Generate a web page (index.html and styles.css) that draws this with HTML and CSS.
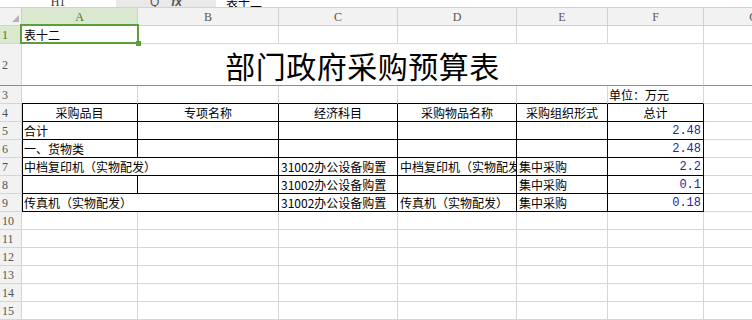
FILE: index.html
```html
<!DOCTYPE html>
<html lang="zh-CN">
<head>
    <meta charset="UTF-8">
    <title>部门政府采购预算表</title>
    <link rel="stylesheet" href="styles.css">
</head>
<body>
    <div class="formula-bar">
        <div class="name-box">H1</div>
        <div class="fx-tools"><span class="fx-icon">Q</span><span class="fx-icon fx">fx</span></div>
        <div class="formula-input">表十二</div>
    </div>

    <table class="sheet">
        <colgroup>
            <col class="w-rh">
            <col class="w-a">
            <col class="w-b">
            <col class="w-c">
            <col class="w-d">
            <col class="w-e">
            <col class="w-f">
            <col class="w-g">
        </colgroup>
        <thead>
            <tr class="col-head">
                <th class="corner"><svg width="7" height="7" viewBox="0 0 7 7"><polygon points="7,0 7,7 0,7" fill="#b4b4b4"/></svg></th>
                <th class="on">A</th>
                <th>B</th>
                <th>C</th>
                <th>D</th>
                <th>E</th>
                <th>F</th>
                <th>G</th>
            </tr>
        </thead>
        <tbody>
            <tr>
                <th class="on">1</th>
                <td class="active">表十二<span class="sel-box"></span><span class="sel-handle"></span></td>
                <td></td><td></td><td></td><td></td><td></td><td></td>
            </tr>
            <tr class="r2">
                <th>2</th>
                <td colspan="6" class="title">部门政府采购预算表</td>
                <td></td>
            </tr>
            <tr>
                <th>3</th>
                <td class="kb"></td><td class="kb"></td><td class="kb"></td><td class="kb"></td><td class="kb"></td>
                <td class="kb unit">单位：万元</td>
                <td></td>
            </tr>
            <tr>
                <th>4</th>
                <td class="k kl mid">采购品目</td>
                <td class="k mid">专项名称</td>
                <td class="k mid">经济科目</td>
                <td class="k mid">采购物品名称</td>
                <td class="k mid">采购组织形式</td>
                <td class="k mid">总计</td>
                <td></td>
            </tr>
            <tr>
                <th>5</th>
                <td class="k kl">合计</td>
                <td class="k"></td><td class="k"></td><td class="k"></td><td class="k"></td>
                <td class="k num">2.48</td>
                <td></td>
            </tr>
            <tr>
                <th>6</th>
                <td class="k kl">一、货物类</td>
                <td class="k"></td><td class="k"></td><td class="k"></td><td class="k"></td>
                <td class="k num">2.48</td>
                <td></td>
            </tr>
            <tr>
                <th>7</th>
                <td colspan="2" class="k kl">中档复印机（实物配发）</td>
                <td class="k">31002办公设备购置</td>
                <td class="k">中档复印机（实物配发）</td>
                <td class="k">集中采购</td>
                <td class="k num">2.2</td>
                <td></td>
            </tr>
            <tr>
                <th>8</th>
                <td class="k kl"></td>
                <td class="k"></td>
                <td class="k">31002办公设备购置</td>
                <td class="k"></td>
                <td class="k">集中采购</td>
                <td class="k num">0.1</td>
                <td></td>
            </tr>
            <tr>
                <th>9</th>
                <td colspan="2" class="k kl">传真机（实物配发）</td>
                <td class="k">31002办公设备购置</td>
                <td class="k">传真机（实物配发）</td>
                <td class="k">集中采购</td>
                <td class="k num">0.18</td>
                <td></td>
            </tr>
            <tr><th>10</th><td></td><td></td><td></td><td></td><td></td><td></td><td></td></tr>
            <tr><th>11</th><td></td><td></td><td></td><td></td><td></td><td></td><td></td></tr>
            <tr><th>12</th><td></td><td></td><td></td><td></td><td></td><td></td><td></td></tr>
            <tr><th>13</th><td></td><td></td><td></td><td></td><td></td><td></td><td></td></tr>
            <tr><th>14</th><td></td><td></td><td></td><td></td><td></td><td></td><td></td></tr>
            <tr><th>15</th><td></td><td></td><td></td><td></td><td></td><td></td><td></td></tr>
            <tr><th>16</th><td></td><td></td><td></td><td></td><td></td><td></td><td></td></tr>
        </tbody>
    </table>
</body>
</html>
```

FILE: styles.css
```css
body {
    margin: 0;
    width: 752px;
    height: 320px;
    overflow: hidden;
    background-color: #fff;
    color: #000;
    font-family: "Noto Sans CJK SC", sans-serif;
    font-size: 12px;
}

/* formula bar, mostly scrolled out of view */
.formula-bar {
    display: flex;
    align-items: flex-end;
    height: 7px;
    overflow: hidden;
    background-color: #e9e9e9;
    border-bottom: 1px solid #d2d2d2;
}

.name-box,
.fx-tools,
.formula-input {
    height: 16px;
    line-height: 16px;
    margin-bottom: -3px;
    flex-shrink: 0;
}

.name-box {
    width: 116px;
    background-color: #fff;
    text-align: center;
    color: #333;
    font-family: "Liberation Serif", serif;
}

.fx-tools {
    width: 100px;
    display: flex;
    justify-content: center;
    gap: 12px;
    color: #555;
    font-family: "Liberation Sans", sans-serif;
}

.fx-icon.fx {
    font-style: italic;
    font-weight: bold;
}

.formula-input {
    flex-grow: 1;
    background-color: #fff;
    padding-left: 10px;
}

/* sheet grid */
.sheet {
    border-collapse: separate;
    border-spacing: 0;
    table-layout: fixed;
    width: 804px;
}

.w-rh { width: 22px; }
.w-a { width: 116px; }
.w-b { width: 141px; }
.w-c { width: 119px; }
.w-d { width: 119px; }
.w-e { width: 91px; }
.w-f { width: 96px; }
.w-g { width: 100px; }

.sheet tr {
    height: 18px;
}

.sheet th,
.sheet td {
    padding: 0 2px;
    border-right: 1px solid #d6d6d6;
    border-bottom: 1px solid #d6d6d6;
    line-height: 16px;
    white-space: nowrap;
    overflow: hidden;
    text-align: left;
    font-weight: normal;
}

.col-head th {
    background-color: #f2f2f2;
    border-color: #d0d0d0;
    color: #555;
    text-align: center;
    font-family: "Liberation Serif", serif;
    font-size: 12px;
}

.col-head th.corner {
    padding: 0;
    text-align: right;
    vertical-align: bottom;
    line-height: 0;
}

.corner svg {
    margin: 0 2px 3px 0;
}

tbody th {
    background-color: #f2f2f2;
    border-color: #d0d0d0;
    color: #555;
    text-align: center;
    padding: 0 8px 0 0;
    font-family: "Liberation Serif", serif;
    font-size: 12px;
}

.sheet th.on {
    background-color: #d9e8cf;
    color: #3f7d2a;
}

.col-head th.on {
    border-bottom-color: #5b9e3c;
}

/* selected cell */
.sheet td.active {
    position: relative;
    overflow: visible;
}

.sel-box {
    position: absolute;
    left: -2px;
    top: -2px;
    right: -2px;
    bottom: -1px;
    border: 2px solid #5b9e3c;
}

.sel-handle {
    position: absolute;
    right: -4px;
    bottom: -3px;
    width: 5px;
    height: 5px;
    background-color: #5b9e3c;
}

.r2 {
    height: 42px !important;
}

.r2 th,
.r2 td {
    border-bottom-color: #74a556;
}

.sheet td.title {
    text-align: center;
    font-size: 30px;
    line-height: 36px;
    padding-top: 1px;
    letter-spacing: 0.5px;
}

.sheet td.unit {
    padding-left: 1px;
}

/* black table frame */
.sheet td.kb { border-bottom-color: #000; }

.sheet td.k {
    border-right-color: #000;
    border-bottom-color: #000;
}

.sheet td.kl {
    box-shadow: inset 1px 0 0 #000;
}

.sheet td.mid {
    text-align: center;
}

.sheet td.num {
    text-align: right;
    font-family: "Liberation Mono", monospace;
    color: #2424a6;
}
```
